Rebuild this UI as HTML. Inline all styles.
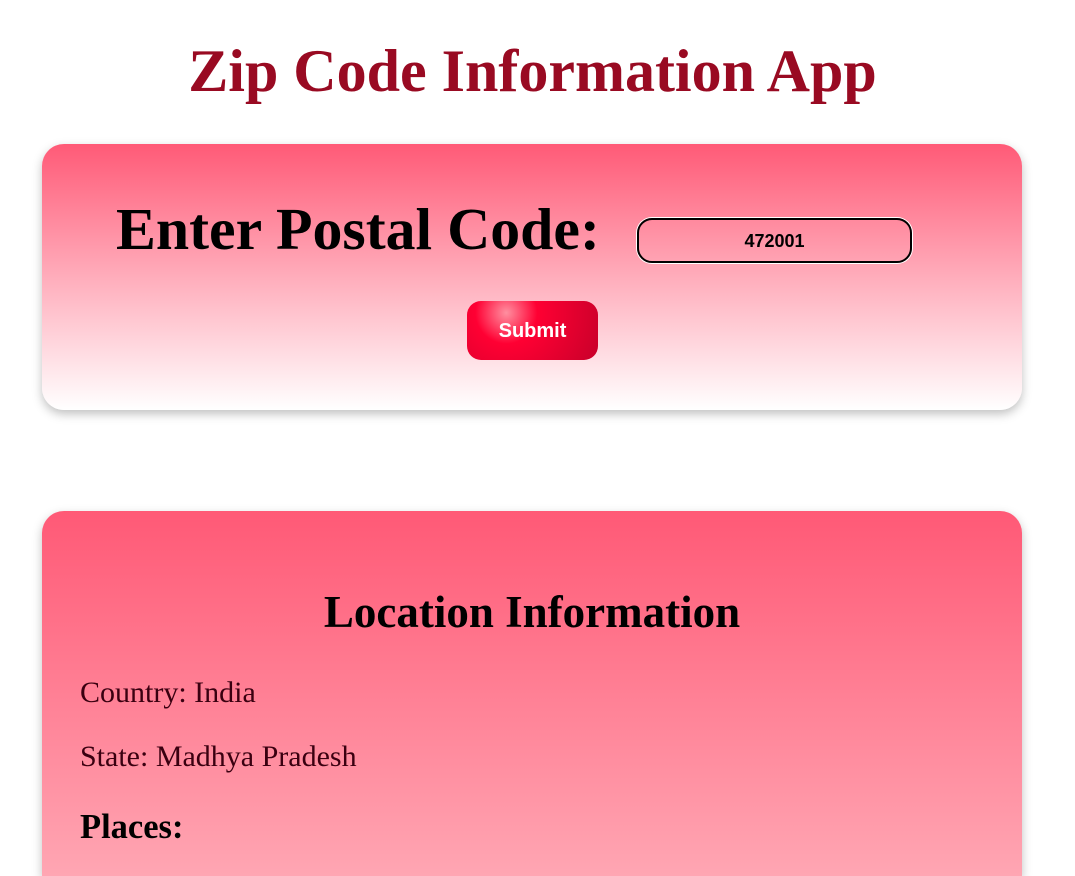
<!DOCTYPE html>
<html style="overflow:hidden;height:876px"><head><style>
body{margin:0;background:#fff;font-family:"Liberation Serif",serif;width:1075px;height:876px;overflow:hidden;position:relative}
h1{position:absolute;top:38px;left:-5px;width:1075px;margin:0;text-align:center;color:#990a22;font-size:60px;font-weight:bold;line-height:66px}
.c1{position:absolute;left:42px;top:144px;width:980px;height:266px;border-radius:22px;background:linear-gradient(#ff5a77,#fff);box-shadow:0 4px 10px rgba(0,0,0,.25)}
.lbl{position:absolute;left:116px;top:196px;font-size:59.8px;font-weight:bold;margin:0;line-height:66px}
.inp{position:absolute;left:637px;top:218px;width:271px;height:41px;border:2px solid #000;border-radius:15px;box-shadow:0 0 0 1px #fff;font:bold 18px "Liberation Sans",sans-serif;text-align:center;line-height:43px}
.btn{position:absolute;left:467px;top:301px;width:131px;height:59px;border-radius:14px;background:radial-gradient(circle at 30% 20%,#ff8fa0 0,#ff0033 30%,#c8002a 100%);color:#fff;font:bold 20px "Liberation Sans",sans-serif;text-align:center;line-height:61px}
.c2{position:absolute;left:42px;top:511px;width:980px;height:365px;border-radius:22px 22px 0 0;background:linear-gradient(#ff5976,#ffa6b3);box-shadow:0 4px 10px rgba(0,0,0,.25)}
h2{position:absolute;left:0;width:980px;top:76px;margin:0;text-align:center;font-size:45px;line-height:50px}
.p{position:absolute;left:38px;font-size:30px;color:#3a0010;margin:0;line-height:34px}
h3{position:absolute;left:38px;top:297px;margin:0;font-size:34.5px;line-height:38px}
</style></head><body>
<h1>Zip Code Information App</h1>
<div class="c1"></div>
<div class="lbl">Enter Postal Code:</div>
<div class="inp">472001</div>
<div class="btn">Submit</div>
<div class="c2">
<h2>Location Information</h2>
<p class="p" style="top:165px">Country: India</p>
<p class="p" style="top:229px">State: Madhya Pradesh</p>
<h3>Places:</h3>
</div>
</body></html>
